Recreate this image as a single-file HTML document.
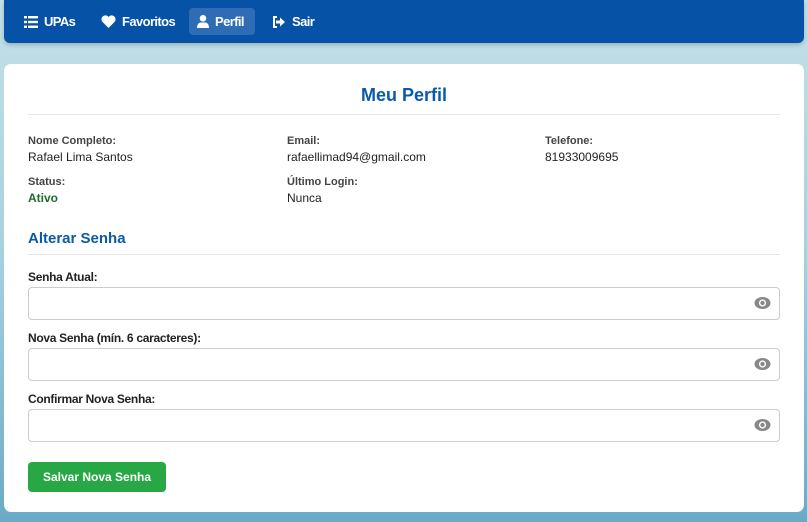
<!DOCTYPE html>
<html><head><meta charset="utf-8"><style>
*{box-sizing:border-box;margin:0;padding:0}
body{width:807px;height:522px;overflow:hidden;font-family:"Liberation Sans",Arial,sans-serif;background:linear-gradient(180deg,#c4e0e8 0%,#a6d0de 50%,#6aaac6 100%);position:relative}
.nav{position:absolute;left:4px;top:0;width:800px;height:43px;background:#0652a6;border-radius:0 0 6px 6px;box-shadow:0 2px 4px rgba(0,0,0,.2)}
.nav a{position:absolute;top:8px;height:27px;line-height:27px;color:#fff;font-size:13px;font-weight:bold;display:flex;align-items:center;gap:6px;padding:0 8px;border-radius:4px;letter-spacing:-0.6px}
.nav a.act{background:rgba(255,255,255,.16)}
.card{position:absolute;left:4px;top:64px;width:800px;height:448px;background:#fff;border-radius:7px}
h1{position:absolute;left:0;width:800px;top:21px;text-align:center;color:#0b5aa8;font-size:18px;font-weight:bold}
.hr{position:absolute;left:24px;width:752px;height:1px;background:#e6e6e6}
.lab{position:absolute;font-size:11px;font-weight:bold;color:#444}
.val{position:absolute;font-size:12px;color:#222}
h2{position:absolute;left:24px;top:166px;font-size:15px;color:#0b5aa8;font-weight:bold}
.fl{position:absolute;left:24px;font-size:12px;font-weight:bold;color:#222;letter-spacing:-0.3px}
.in{position:absolute;left:24px;width:752px;height:33px;border:1px solid #ccc;border-radius:4px}
.in svg{position:absolute;right:8px;top:8px}
.btn{position:absolute;left:24px;top:398px;width:138px;height:30px;background:#28a745;border-radius:4px;color:#fff;font-size:12px;font-weight:bold;text-align:center;line-height:30px}
</style></head><body>
<div class="nav">
<a style="left:12px"><svg width="14" height="12" viewBox="0 0 14 12"><g fill="#fff"><rect x="0" y="0" width="3" height="2.4"/><rect x="0" y="4.8" width="3" height="2.4"/><rect x="0" y="9.6" width="3" height="2.4"/><rect x="4" y="0" width="10" height="2.4"/><rect x="4" y="4.8" width="10" height="2.4"/><rect x="4" y="9.6" width="10" height="2.4"/></g></svg>UPAs</a>
<a style="left:89px"><svg width="15" height="13" viewBox="0 0 24 21"><path fill="#fff" d="M12 21L2 11A6 6 0 0 1 12 3A6 6 0 0 1 22 11Z"/></svg>Favoritos</a>
<a class="act" style="left:185px;width:66px"><svg width="12" height="13" viewBox="0 0 12 13"><circle cx="6" cy="3.3" r="3.3" fill="#fff"/><path fill="#fff" d="M0 13C0 9 2 7.5 4 7.5H8C10 7.5 12 9 12 13Z"/></svg>Perfil</a>
<a style="left:260px"><svg width="14" height="12" viewBox="0 0 14 12"><path fill="none" stroke="#fff" stroke-width="2" d="M5 1H2V11H5"/><path fill="#fff" d="M4 4.5H8V1.5L13 6L8 10.5V7.5H4Z"/></svg>Sair</a>
</div>
<div class="card">
<h1>Meu Perfil</h1>
<div class="hr" style="top:50px"></div>
<div class="lab" style="left:24px;top:71px">Nome Completo:</div><div class="val" style="left:24px;top:86px">Rafael Lima Santos</div>
<div class="lab" style="left:283px;top:71px">Email:</div><div class="val" style="left:283px;top:86px">rafaellimad94@gmail.com</div>
<div class="lab" style="left:541px;top:71px">Telefone:</div><div class="val" style="left:541px;top:86px">81933009695</div>
<div class="lab" style="left:24px;top:112px">Status:</div><div class="val" style="left:24px;top:127px;color:#1e6b2a;font-weight:bold">Ativo</div>
<div class="lab" style="left:283px;top:112px">Último Login:</div><div class="val" style="left:283px;top:127px">Nunca</div>
<h2>Alterar Senha</h2>
<div class="hr" style="top:190px"></div>
<div class="fl" style="top:206px">Senha Atual:</div>
<div class="in" style="top:223px"><svg width="17" height="14" viewBox="0 0 17 14"><ellipse cx="8.5" cy="7" rx="8" ry="6" fill="#888"/><circle cx="8.5" cy="7" r="3.6" fill="#fff"/><circle cx="8.5" cy="7" r="2.2" fill="#888"/></svg></div>
<div class="fl" style="top:267px">Nova Senha (mín. 6 caracteres):</div>
<div class="in" style="top:284px"><svg width="17" height="14" viewBox="0 0 17 14"><ellipse cx="8.5" cy="7" rx="8" ry="6" fill="#888"/><circle cx="8.5" cy="7" r="3.6" fill="#fff"/><circle cx="8.5" cy="7" r="2.2" fill="#888"/></svg></div>
<div class="fl" style="top:328px">Confirmar Nova Senha:</div>
<div class="in" style="top:345px"><svg width="17" height="14" viewBox="0 0 17 14"><ellipse cx="8.5" cy="7" rx="8" ry="6" fill="#888"/><circle cx="8.5" cy="7" r="3.6" fill="#fff"/><circle cx="8.5" cy="7" r="2.2" fill="#888"/></svg></div>
<div class="btn">Salvar Nova Senha</div>
</div>
</body></html>
